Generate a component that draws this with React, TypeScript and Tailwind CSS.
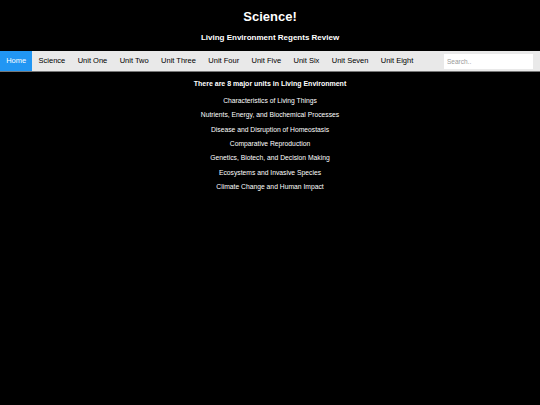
const navItems = ['Home', 'Science', 'Unit One', 'Unit Two', 'Unit Three', 'Unit Four', 'Unit Five', 'Unit Six', 'Unit Seven', 'Unit Eight']

const units = [
    'Characteristics of Living Things',
    'Nutrients, Energy, and Biochemical Processes',
    'Disease and Disruption of Homeostasis',
    'Comparative Reproduction',
    'Genetics, Biotech, and Decision Making',
    'Ecosystems and Invasive Species',
    'Climate Change and Human Impact',
]

export default function App() {
    return (
        <div className="min-h-[405px] w-[540px] bg-black text-white font-['Liberation_Sans',Arial,sans-serif]">
            {/* Header */}
            <h1 className="pt-[8.5px] text-center text-[13px] leading-[15px] font-bold">Science!</h1>
            <p className="mt-[9.5px] text-center text-[8px] leading-[10px] font-bold">Living Environment Regents Review</p>

            {/* Top nav */}
            <nav className="mt-[8px] flex h-[21px] items-stretch border-b border-[#777] bg-[#e9e9e9]">
                {navItems.map((item, i) => (
                    <a
                        key={item}
                        className={`flex items-center px-[6.2px] text-[7.5px] ${i === 0 ? 'bg-[#2196f3] text-white' : 'text-black'}`}
                    >
                        {item}
                    </a>
                ))}
                <div className="ml-auto flex items-center pr-[7px]">
                    <input
                        placeholder="Search.."
                        className="h-[15px] w-[89px] bg-white px-[3px] text-[6.5px] text-black placeholder:text-[#999] outline-none"
                    />
                </div>
            </nav>

            {/* Content */}
            <div className="text-center">
                <h3 className="mt-[8px] text-[7px] leading-[8px] font-bold">There are 8 major units in Living Environment</h3>
                <ul className="mt-[6px]">
                    {units.map(u => (
                        <li key={u} className="text-[6.75px] leading-[14.35px]">{u}</li>
                    ))}
                </ul>
            </div>
        </div>
    )
}
